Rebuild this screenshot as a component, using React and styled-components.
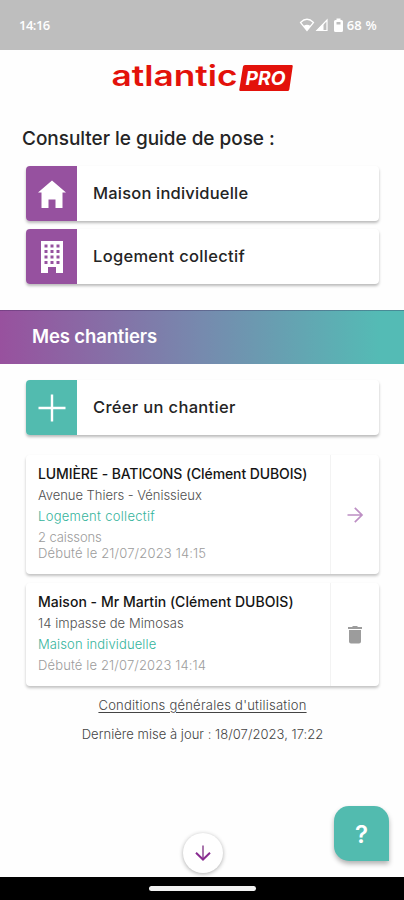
import React from "react";
import styled, { createGlobalStyle } from "styled-components";

const purple = "#96519f";
const teal = "#52bbaf";

const GlobalStyle = createGlobalStyle`
  * {
    box-sizing: border-box;
  }

  body {
    margin: 0;
    background: #fff;
    font-family: Inter, "Liberation Sans", sans-serif;
  }
`;

const Screen = styled.div`
  position: relative;
  display: flex;
  flex-direction: column;
  width: 404px;
  height: 900px;
  overflow: hidden;
  background: #fefefe;
  color: #242424;
`;

const StatusBar = styled.header`
  display: flex;
  align-items: center;
  justify-content: space-between;
  height: 50px;
  padding: 0 27px 0 19px;
  background: #bebebe;
  color: #fff;
  font-family: "Open Sans", sans-serif;
  font-size: 13px;
  font-weight: 600;
`;

const StatusIcons = styled.div`
  display: flex;
  align-items: center;
  gap: 3px;

  svg {
    display: block;
  }
`;

const LogoRow = styled.div`
  height: 59px;
  padding: 5px 0 0 108px;

  svg {
    display: block;
    overflow: visible;
  }
`;

const Label = styled.span`
  letter-spacing: ${(p) => p.$spacing || 0}px;
  white-space: nowrap;
`;

const Title = styled.h1`
  margin: 0;
  height: 57px;
  padding: 18px 0 0 22px;
  font-size: 19px;
  line-height: 24px;
  font-weight: 500;
`;

const ButtonList = styled.div`
  display: flex;
  flex-direction: column;
  gap: 8px;
  padding: 0 25px 0 26px;
`;

const MenuButton = styled.button`
  display: flex;
  align-items: center;
  height: 55px;
  padding: 0;
  border: none;
  border-radius: 4px;
  background: #fff;
  color: inherit;
  font-family: inherit;
  font-size: 16.5px;
  font-weight: 500;
  text-align: left;
  box-shadow: 0 2px 3px rgba(0, 0, 0, 0.27);

  ${Label} {
    padding-bottom: 2px;
  }
`;

const IconBox = styled.span`
  display: flex;
  align-items: center;
  justify-content: center;
  width: 51px;
  height: 55px;
  margin-right: 16px;
  border-radius: 4px 0 0 4px;
  background: ${(p) => p.$color};
`;

const Band = styled.h2`
  display: flex;
  align-items: center;
  height: 54px;
  margin: 26px 0 16px;
  padding: 0 0 3px 32px;
  border-top: 1px solid rgba(50, 30, 80, 0.3);
  background: linear-gradient(90deg, #98519e 0%, #768aae 50%, #54bbb5 94%);
  color: #fff;
  font-size: 18.5px;
  font-weight: 600;
`;

const Sites = styled.div`
  display: flex;
  flex-direction: column;
  gap: 9px;
  padding: 20px 25px 0 26px;
`;

const SiteCard = styled.article`
  display: flex;
  height: ${(p) => p.$height}px;
  border-radius: 4px;
  background: #fff;
  box-shadow: 0 2px 3px rgba(0, 0, 0, 0.24);
`;

const SiteInfo = styled.div`
  display: flex;
  flex-direction: column;
  width: 305px;
  padding: 8px 0 0 12px;
  border-right: 1px solid #f3f3f3;
  font-size: 13px;
  font-weight: 300;
`;

const SiteName = styled.div`
  height: 21px;
  line-height: 22px;
  font-size: 14px;
  font-weight: 500;
  color: #151515;
`;

const SiteLine = styled.div`
  height: ${(p) => p.$height || 21}px;
  line-height: 22px;
  color: ${(p) => p.$color};
`;

const SiteAction = styled.div`
  display: flex;
  flex: 1;
  align-items: center;
  justify-content: center;
`;

const Legal = styled.footer`
  display: flex;
  flex-direction: column;
  align-items: center;
  gap: 9px;
  padding: 9px 0 0 1px;
  font-size: 13px;
  line-height: 20px;
  font-weight: 300;
  color: #444;
`;

const TermsLink = styled.a`
  text-decoration: underline;
  text-underline-offset: 2px;
`;

const ScrollButton = styled.button`
  position: absolute;
  left: 183px;
  top: 833px;
  display: flex;
  align-items: center;
  justify-content: center;
  width: 40px;
  height: 40px;
  padding: 0;
  border: none;
  border-radius: 50%;
  background: #fff;
  box-shadow: 0 1px 4px rgba(0, 0, 0, 0.32);
`;

const HelpButton = styled.button`
  position: absolute;
  left: 334px;
  top: 806px;
  width: 55px;
  height: 55px;
  padding: 1px 0 0;
  border: none;
  border-radius: 15px 15px 0 15px;
  background: ${teal};
  color: #fff;
  font-family: Inter, sans-serif;
  font-size: 24px;
  font-weight: 600;
  box-shadow: 0 3px 5px rgba(0, 0, 0, 0.3);
`;

const NavBar = styled.div`
  display: flex;
  justify-content: center;
  height: 23px;
  margin-top: auto;
  padding-top: 9px;
  background: #000;
`;

const NavHandle = styled.div`
  width: 107px;
  height: 5px;
  border-radius: 3px;
  background: #f2f2f2;
`;

const Logo = () => (
  <svg width="190" height="44" viewBox="108 55 190 44">
    <text
      x="111.500"
      y="86"
      textLength="126"
      lengthAdjust="spacingAndGlyphs"
      fontFamily="Inter, sans-serif"
      fontSize="28"
      fontWeight="600"
      fill="#e3120b"
    >
      atlantic
    </text>
    <path d="M245 65H291.500Q293 65 292.700 66.500L289.300 89.500Q289 91 287.500 91H240.500Q239 91 239.300 89.500L243 66.500Q243.300 65 245 65Z" fill="#e3120b" />
    <text
      x="245.500"
      y="84.500"
      textLength="40"
      lengthAdjust="spacingAndGlyphs"
      fontFamily="Inter, sans-serif"
      fontSize="18.500"
      fontStyle="italic"
      fontWeight="700"
      fill="#fff"
    >
      PRO
    </text>
  </svg>
);

const HouseIcon = () => (
  <svg width="30" height="30" viewBox="0 0 30 30" fill="#fff">
    <path d="M15 1.500L1 13.500H4.500V29H11.500V20.500H18.500V29H25.500V13.500H29Z" />
  </svg>
);

const BuildingIcon = () => (
  <svg width="24" height="34" viewBox="0 0 24 34">
    <path d="M1 1H23V33H16V27H8V33H1Z" fill="#fff" />
    {[4.5, 10, 15.5, 21].map((y) =>
      [4.5, 10.5, 16.5].map((x) => (
        <rect key={`${x}-${y}`} x={x} y={y} width="3" height="3" fill={purple} />
      ))
    )}
  </svg>
);

const PlusIcon = () => (
  <svg width="28" height="28" viewBox="0 0 28 28" stroke="#fff" strokeWidth="2.400">
    <path d="M14 .5V27.500M.5 14H27.500" />
  </svg>
);

const ArrowRight = () => (
  <svg width="18" height="18" viewBox="0 0 18 18" fill="none" stroke="#bd8fc4" strokeWidth="1.700">
    <path d="M1.500 9H15.500M8.800 1.800L16 9L8.800 16.200" />
  </svg>
);

const ArrowDown = () => (
  <svg width="18" height="18" viewBox="0 0 18 18" fill="none" strokeWidth="2">
    <path d="M9 1.500V15" stroke="#aa76ad" />
    <path d="M2 8.800L9 15.500L16 8.800" stroke="#892b91" />
  </svg>
);

const TrashIcon = () => (
  <svg width="16" height="20" viewBox="0 0 16 20" fill="#9c9c9c">
    <path d="M1 2H5L6 1H10L11 2H15V4H1ZM2 5H14V16.500Q14 18.500 12 18.500H4Q2 18.500 2 16.500Z" />
  </svg>
);

const App = () => {
  return (
    <>
      <GlobalStyle />
      <Screen>
        <StatusBar>
          <Label $spacing={-0.5}>14:16</Label>
          <StatusIcons>
            <svg width="31" height="16" viewBox="0 0 31 16" fill="#fff">
              <path d="M1.500 5.500Q8 -1 14.500 5.500L8 13.500Z" fill="none" stroke="#fff" strokeWidth="1.200" />
              <path d="M4.500 9Q8 6.500 11.500 9L8 13.500Z" />
              <path d="M18 13.500L28 3V13.500Z" fill="none" stroke="#fff" strokeWidth="1.200" />
              <path d="M17 14L24.500 6.500V14Z" />
            </svg>
            <svg width="11" height="15" viewBox="0 0 11 15">
              <path d="M3.500 .5H7.500V2H8.500Q10 2 10 3.500V12.500Q10 14 8.500 14H2.500Q1 14 1 12.500V3.500Q1 2 2.500 2H3.500Z" fill="#fff" />
              <path d="M3.500 4H7.500V6.500H3.500Z" fill="#bebebe" />
            </svg>
            <Label $spacing={0.2}>68 %</Label>
          </StatusIcons>
        </StatusBar>
        <LogoRow>
          <Logo />
        </LogoRow>
        <Title>
          <Label $spacing={-0.04}>Consulter le guide de pose :</Label>
        </Title>
        <ButtonList>
          <MenuButton>
            <IconBox $color={purple}>
              <HouseIcon />
            </IconBox>
            <Label $spacing={0.19}>Maison individuelle</Label>
          </MenuButton>
          <MenuButton>
            <IconBox $color={purple}>
              <BuildingIcon />
            </IconBox>
            <Label $spacing={0.3}>Logement collectif</Label>
          </MenuButton>
        </ButtonList>
        <Band>
          <Label $spacing={-0.13}>Mes chantiers</Label>
        </Band>
        <ButtonList>
          <MenuButton>
            <IconBox $color={teal}>
              <PlusIcon />
            </IconBox>
            <Label $spacing={0.33}>Créer un chantier</Label>
          </MenuButton>
        </ButtonList>
        <Sites>
          <SiteCard $height={119}>
            <SiteInfo>
              <SiteName>
                <Label $spacing={-0.11}>LUMIÈRE - BATICONS (Clément DUBOIS)</Label>
              </SiteName>
              <SiteLine $color="#505050">
                <Label $spacing={-0.04}>Avenue Thiers - Vénissieux</Label>
              </SiteLine>
              <SiteLine $color="#35b49c">
                <Label $spacing={0.3}>Logement collectif</Label>
              </SiteLine>
              <SiteLine $height={16} $color="#9c9c9c">
                <Label $spacing={-0.1}>2 caissons</Label>
              </SiteLine>
              <SiteLine $color="#9c9c9c">
                <Label $spacing={0.16}>Débuté le 21/07/2023 14:15</Label>
              </SiteLine>
            </SiteInfo>
            <SiteAction>
              <ArrowRight />
            </SiteAction>
          </SiteCard>
          <SiteCard $height={103}>
            <SiteInfo>
              <SiteName>
                <Label $spacing={0.03}>Maison - Mr Martin (Clément DUBOIS)</Label>
              </SiteName>
              <SiteLine $color="#505050">
                <Label $spacing={0.06}>14 impasse de Mimosas</Label>
              </SiteLine>
              <SiteLine $color="#35b49c">
                <Label $spacing={0.12}>Maison individuelle</Label>
              </SiteLine>
              <SiteLine $color="#9c9c9c">
                <Label $spacing={0.14}>Débuté le 21/07/2023 14:14</Label>
              </SiteLine>
            </SiteInfo>
            <SiteAction>
              <TrashIcon />
            </SiteAction>
          </SiteCard>
        </Sites>
        <Legal>
          <TermsLink>
            <Label $spacing={0.24}>Conditions générales d'utilisation</Label>
          </TermsLink>
          <Label $spacing={0.03}>Dernière mise à jour : 18/07/2023, 17:22</Label>
        </Legal>
        <ScrollButton>
          <ArrowDown />
        </ScrollButton>
        <HelpButton>?</HelpButton>
        <NavBar>
          <NavHandle />
        </NavBar>
      </Screen>
    </>
  );
};

export default App;
